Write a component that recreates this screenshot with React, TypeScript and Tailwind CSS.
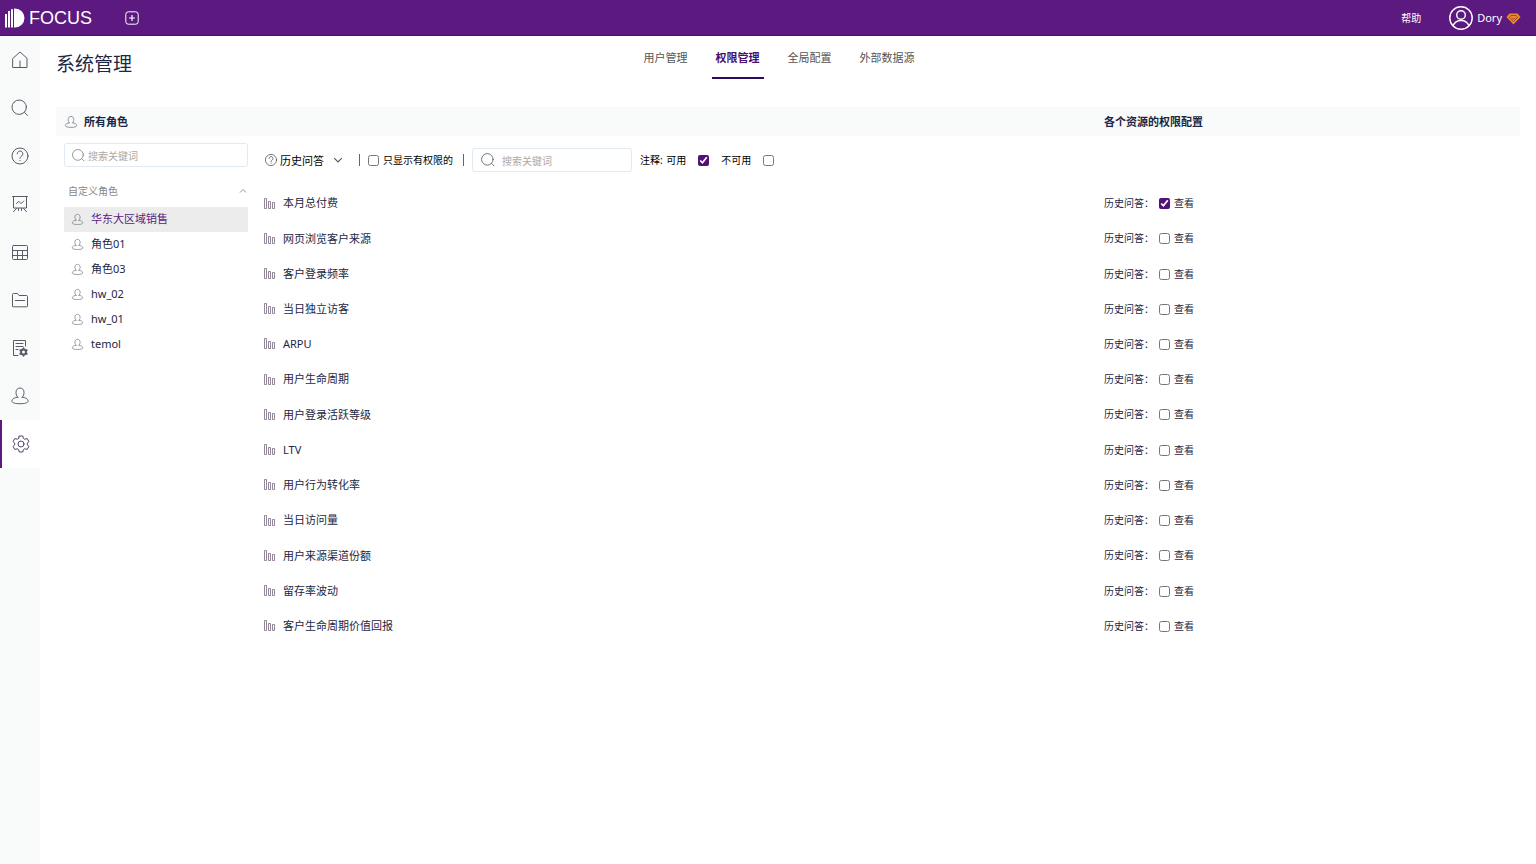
import type { ReactNode } from "react";

interface IconProps {
  className?: string;
}

function Icon({ className, children }: IconProps & { children: ReactNode }) {
  return (
    <svg
      viewBox="0 0 20 20"
      className={`shrink-0 ${className ?? ""}`}
      fill="none"
      stroke="currentColor"
      strokeLinecap="round"
      strokeLinejoin="round"
      aria-hidden="true"
    >
      {children}
    </svg>
  );
}

function HomeIcon({ className }: IconProps) {
  return (
    <Icon className={className}>
      <path d="M3 8.2 10 2l7 6.2v9.3H3zM10 11v6.500" />
    </Icon>
  );
}

function SearchIcon({ className }: IconProps) {
  return (
    <Icon className={className}>
      <circle cx="9.2" cy="9.2" r="7.2" />
      <path d="m14.5 14.4 3 3" />
    </Icon>
  );
}

function HelpIcon({ className }: IconProps) {
  return (
    <Icon className={className}>
      <circle cx="10" cy="10" r="8" />
      <path d="M7.2 7.800a2.800 2.800 0 1 1 4.500 2.200c-1 .7-1.700 1.200-1.700 2.300M10 14.400v.3" />
    </Icon>
  );
}

function BoardIcon({ className }: IconProps) {
  return (
    <Icon className={className}>
      <path d="M2.500 2.500h15M3.500 2.500v11.500h13V2.500M6.500 9.500l2.300-2.200 2.200 2.400 2.700-2.700M6.500 14.500l-3 3.200M13.500 14.500l3 3.200M8.500 14.500v2M11.500 14.500v2" />
    </Icon>
  );
}

function TableIcon({ className }: IconProps) {
  return (
    <Icon className={className}>
      <rect x="2.500" y="3.500" width="15" height="14" rx="1" />
      <path d="M2.500 8.500h15M2.500 13.500h15M7.500 8.500v9M12.500 8.500v9" />
    </Icon>
  );
}

function FolderIcon({ className }: IconProps) {
  return (
    <Icon className={className}>
      <path d="M2.500 16V4.500a1 1 0 0 1 1-1h4l1.500 2h7.500a1 1 0 0 1 1 1V16a.8.8 0 0 1-.8.8H3.300a.8.8 0 0 1-.8-.8zM5.500 10.500h9" />
    </Icon>
  );
}

function ReportIcon({ className }: IconProps) {
  return (
    <Icon className={className}>
      <path d="M8 17.500H3.500v-15h12V8M6 5.500h7M6 8.500h7M6 11.500h2" />
      <circle cx="13.500" cy="14" r="2.500" strokeWidth="2" />
      <path
        d="M13.500 10.200v1M13.500 16.800v1M10.200 12.100l.9.5M15.900 15.400l.9.5M10.200 15.900l.9-.5M15.900 12.600l.9-.5"
        strokeWidth="1.800"
      />
    </Icon>
  );
}

function UserIcon({ className }: IconProps) {
  return (
    <Icon className={className}>
      <path d="M7.800 11.200C6.500 10 6 8.400 6 6.300 6 3.700 7.700 2 10 2s4 1.700 4 4.300c0 2.100-.5 3.700-1.800 4.900M7.800 11.200c-3.200.5-5.800 1.600-5.800 3.800 0 1.900 3.200 2.700 8 2.700s8-.8 8-2.700c0-2.200-2.600-3.300-5.800-3.800" />
    </Icon>
  );
}

function GearIcon({ className }: IconProps) {
  return (
    <Icon className={className}>
      <circle cx="10" cy="10" r="3" />
      <path d="M8.200 2h3.600l.5 2.300 1.500.9 2.400-.6 1.800 3-1.700 1.500v1.800l1.700 1.500-1.800 3-2.400-.6-1.500.9-.5 2.300H8.200l-.5-2.300-1.500-.9-2.400.6-1.800-3 1.700-1.500V9.100L2 7.600l1.800-3 2.400.6 1.500-.9z" />
    </Icon>
  );
}

function BarsIcon({ className }: IconProps) {
  return (
    <svg viewBox="0 0 12 12" className={className} fill="none" stroke="currentColor" aria-hidden="true">
      <path d="M.5.500h2v10h-2zM4.500 3.500h2v7h-2zM8.500 4.500h2v6h-2z" strokeWidth=".8" />
    </svg>
  );
}

function Chevron({ className, up }: IconProps & { up?: boolean }) {
  return (
    <svg viewBox="0 0 8 8" className={className} fill="none" stroke="currentColor" aria-hidden="true">
      <path d={up ? "M1 5.500 4 2.500l3 3" : "M1 2.500l3 3 3-3"} strokeWidth=".9" />
    </svg>
  );
}

const navItems = [
  { label: "首页", icon: HomeIcon },
  { label: "搜索", icon: SearchIcon },
  { label: "问答", icon: HelpIcon },
  { label: "看板", icon: BoardIcon },
  { label: "数据表", icon: TableIcon },
  { label: "资源", icon: FolderIcon },
  { label: "报表", icon: ReportIcon },
  { label: "用户", icon: UserIcon },
  { label: "系统管理", icon: GearIcon, active: true },
];

const tabs = [
  { label: "用户管理" },
  { label: "权限管理", active: true },
  { label: "全局配置" },
  { label: "外部数据源" },
];

const roles = ["华东大区域销售", "角色01", "角色03", "hw_02", "hw_01", "temol"];

const resources = [
  { name: "本月总付费", canView: true },
  { name: "网页浏览客户来源", canView: false },
  { name: "客户登录频率", canView: false },
  { name: "当日独立访客", canView: false },
  { name: "ARPU", canView: false },
  { name: "用户生命周期", canView: false },
  { name: "用户登录活跃等级", canView: false },
  { name: "LTV", canView: false },
  { name: "用户行为转化率", canView: false },
  { name: "当日访问量", canView: false },
  { name: "用户来源渠道份额", canView: false },
  { name: "留存率波动", canView: false },
  { name: "客户生命周期价值回报", canView: false },
];

const checkbox = "m-0 size-[11px] shrink-0 accent-[#521078]";

function TopBar() {
  return (
    <header className="flex h-9 items-center border-b border-[#4a0f6b] bg-[#5c197f] text-white">
      <a href="#" className="flex items-center gap-1 pl-1" aria-label="FOCUS">
        <svg viewBox="0 0 21 20" className="h-5 w-[21px]" fill="currentColor" aria-hidden="true">
          <path d="M1 6h2v13.500H1zM4 3h2v16.500H4zM7 1.200h2v18.300H7zM10 .5h1a9.500 9.500 0 0 1 0 19h-1z" />
        </svg>
        <span className="pt-px font-['Liberation_Sans',sans-serif] text-lg leading-5">FOCUS</span>
      </a>
      <button type="button" aria-label="新建" className="ml-[33px]">
        <svg viewBox="0 0 14 14" className="size-3.5" fill="none" stroke="currentColor">
          <rect x=".8" y=".8" width="12.400" height="12.400" rx="2.500" />
          <path d="M7 4v6M4 7h6" strokeWidth="1.200" />
        </svg>
      </button>
      <div className="ml-auto flex items-center pr-[15px]">
        <a href="#" className="mr-7 pt-0.5 text-[10px]">
          帮助
        </a>
        <button type="button" className="flex items-center gap-1 text-[11px]">
          <svg viewBox="0 0 24 24" className="size-6" fill="none" stroke="currentColor" strokeWidth="1.400">
            <circle cx="12" cy="12" r="11.200" />
            <circle cx="12" cy="9" r="4.300" />
            <path d="M4 19.800c1.500-3.600 4.400-5.300 8-5.300s6.500 1.700 8 5.300" />
          </svg>
          <span className="pt-0.5">Dory</span>
          <svg viewBox="0 0 15 12" className="mt-0.5 h-3 w-[15px]" aria-hidden="true">
            <path d="M3.500.5h8l3 3.600-7 7.400-7-7.400z" fill="#f08c1e" />
            <path
              d="M3.200 4.200 5 2.500h5l1.800 1.700-4.300 4.500zM5.500 4.500l2 1.800 2-1.800"
              fill="none"
              stroke="#7a3145"
              strokeWidth=".7"
            />
          </svg>
        </button>
      </div>
    </header>
  );
}

function SideNav() {
  return (
    <nav className="w-10 shrink-0 bg-[#f9fbfb]">
      {navItems.map(({ label, icon: NavIcon, active }) => (
        <a
          key={label}
          href="#"
          aria-label={label}
          className={`flex h-12 items-center justify-center pb-px ${
            active ? "border-l-2 border-[#5c197f] bg-white text-[#56406b]" : "text-[#5a5a68]"
          }`}
        >
          <NavIcon className="size-5" />
        </a>
      ))}
    </nav>
  );
}

function RolePanel() {
  return (
    <aside className="w-[184px] shrink-0">
      <label className="flex h-6 items-center gap-0.5 rounded-[3px] border border-[#e1e9f2] px-1.5 text-[#777]">
        <SearchIcon className="size-[15px]" />
        <input
          type="search"
          aria-label="搜索角色"
          placeholder="搜索关键词"
          className="w-full min-w-0 pt-0.5 text-[10px] outline-none placeholder:text-[#aaa]"
        />
      </label>
      <button
        type="button"
        className="mt-3 flex h-6 w-full items-center justify-between pr-px pl-1 text-[10px] text-[#888]"
      >
        自定义角色
        <Chevron up className="size-2" />
      </button>
      <ul className="mt-1">
        {roles.map((role, i) => (
          <li key={role}>
            <button
              type="button"
              className={`flex h-[25px] w-full items-center gap-[7px] px-[7px] text-[11px] ${
                i === 0 ? "bg-[#ececec] text-[#5c197f]" : "text-[#1c2743]"
              }`}
            >
              <UserIcon className="size-[13px] text-[#6b6b7c]" />
              {role}
            </button>
          </li>
        ))}
      </ul>
    </aside>
  );
}

function FilterBar() {
  return (
    <div className="flex h-6 items-center text-[10px] text-black">
      <HelpIcon className="mr-0.5 size-3.5 text-[#444]" />
      <label className="flex items-center gap-[9px]">
        <select aria-label="资源类型" className="appearance-none pt-0.5 text-[11px] outline-none">
          <option>历史问答</option>
        </select>
        <Chevron className="size-2.5 text-[#555]" />
      </label>
      <span className="mr-2 ml-4 h-3 w-px bg-[#666]" />
      <label className="flex items-center gap-1">
        <input type="checkbox" className={checkbox} />
        只显示有权限的
      </label>
      <span className="mr-2 ml-2.5 h-3 w-px bg-[#666]" />
      <label className="flex h-6 w-40 items-center gap-1.5 rounded-[3px] border border-[#e1e9f2] px-[7px] text-[#555]">
        <SearchIcon className="size-4" />
        <input
          type="search"
          aria-label="搜索资源"
          placeholder="搜索关键词"
          className="w-full min-w-0 pt-0.5 text-[10px] outline-none placeholder:text-[#aaa]"
        />
      </label>
      <span className="ml-2">注释:&nbsp;</span>
      <label className="ml-px flex items-center gap-3">
        可用
        <input type="checkbox" defaultChecked className={checkbox} />
      </label>
      <label className="ml-3 flex items-center gap-3">
        不可用
        <input type="checkbox" className={checkbox} />
      </label>
    </div>
  );
}

function ResourceTable() {
  return (
    <table className="mt-3.5 h-[458px] w-full table-fixed text-left text-[#1c2743]">
      <tbody>
        {resources.map(({ name, canView }) => (
          <tr key={name}>
            <td className="p-0 text-[11px]">
              <div className="flex items-center gap-[7px]">
                <BarsIcon className="size-3 text-[#776a80]" />
                {name}
              </div>
            </td>
            <td className="w-[416px] p-0 text-[10px]">
              <div className="flex items-center">
                <span className="w-[55px]">历史问答：</span>
                <label className="flex items-center gap-1">
                  <input type="checkbox" defaultChecked={canView} className={checkbox} />
                  查看
                </label>
              </div>
            </td>
          </tr>
        ))}
      </tbody>
    </table>
  );
}

export default function App() {
  return (
    <div className="flex min-h-screen flex-col bg-white font-['Noto_Sans','Noto_Sans_CJK_SC',sans-serif]">
      <TopBar />
      <div className="flex flex-1">
        <SideNav />
        <main className="min-w-0 flex-1 px-4">
          <div className="grid grid-cols-[1fr_auto_1fr]">
            <h1 className="pt-3 text-[19px] leading-8 text-[#1c2743]">系统管理</h1>
            <nav className="flex pt-2 pl-0.5">
              {tabs.map(({ label, active }) => (
                <a
                  key={label}
                  href="#"
                  className={`mr-5 h-[35px] border-b-2 px-1 pt-1 text-[11px] leading-5 ${
                    active ? "border-[#2b0a5c] font-bold text-[#4b0d70]" : "border-transparent text-[#555]"
                  }`}
                >
                  {label}
                </a>
              ))}
            </nav>
          </div>
          <div className="mt-[27px] flex h-[29px] items-center bg-[#f9fbfb] text-[11px] font-bold text-[#1c2743]">
            <h2 className="flex flex-1 items-center gap-1.5 pl-2">
              <UserIcon className="size-3.5 text-[#6b6b7c]" />
              <span className="pt-0.5">所有角色</span>
            </h2>
            <h2 className="w-[416px] pt-0.5">各个资源的权限配置</h2>
          </div>
          <div className="flex gap-4 pt-[7px] pl-2">
            <RolePanel />
            <section className="min-w-0 flex-1 pt-[5px]">
              <FilterBar />
              <ResourceTable />
            </section>
          </div>
        </main>
      </div>
    </div>
  );
}
